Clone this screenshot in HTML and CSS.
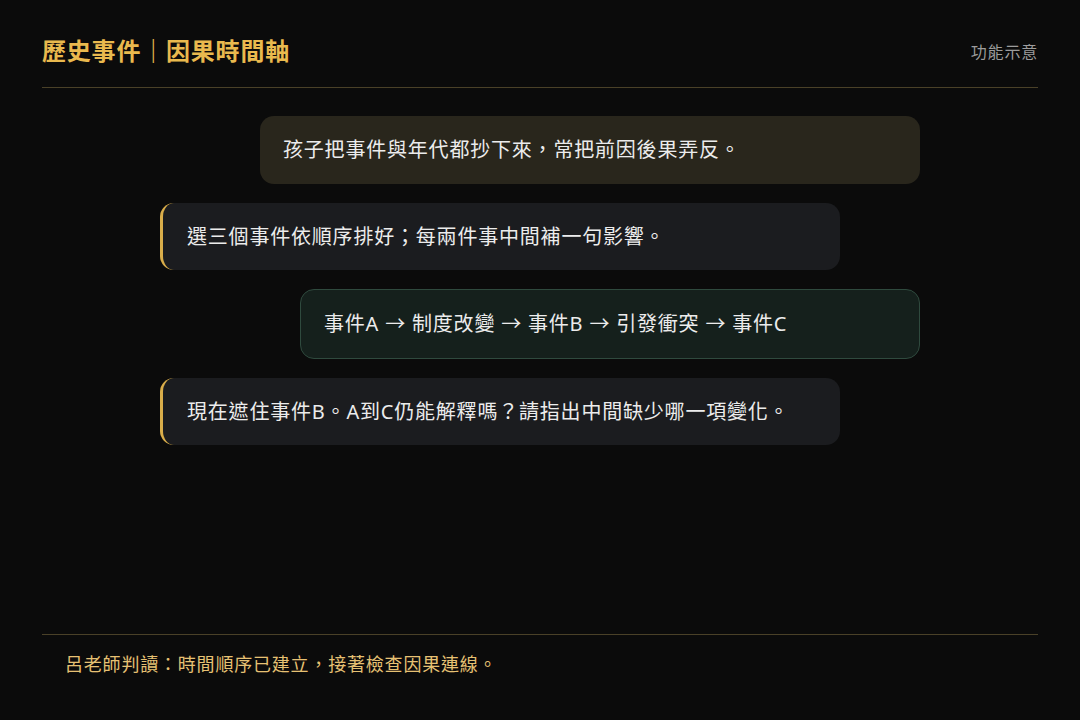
FILE: index.html
```html
<!DOCTYPE html>
<html>
<head lang="zh-Hant">
    <meta charset="UTF-8">
    <title>歷史事件｜因果時間軸</title>
    <link rel="stylesheet" href="styles.css">
</head>
<body>
<div class="page">
    <div class="header">
        <h1 class="title">歷史事件｜因果時間軸</h1>
        <span class="tag">功能示意</span>
    </div>
    <div class="chat">
        <div class="bubble parent">孩子把事件與年代都抄下來，常把前因後果弄反。</div>
        <div class="bubble coach">選三個事件依順序排好；每兩件事中間補一句影響。</div>
        <div class="bubble chain">事件A → 制度改變 → 事件B → 引發衝突 → 事件C</div>
        <div class="bubble coach">現在遮住事件B。A到C仍能解釋嗎？請指出中間缺少哪一項變化。</div>
    </div>
    <div class="footer">呂老師判讀：時間順序已建立，接著檢查因果連線。</div>
</div>
</body>
</html>
```

FILE: styles.css
```css
*{
    margin: 0;
    padding: 0;
    box-sizing: border-box;
}
body{
    background-color: #0b0b0b;
    color: #ececec;
    font-family: "Noto Sans", "Noto Sans CJK TC", sans-serif;
    letter-spacing: 0.8px;
}
.page{
    height: 720px;
    padding: 0 42px;
    display: flex;
    flex-direction: column;
}
.header{
    display: flex;
    justify-content: space-between;
    align-items: center;
    padding: 36px 0 21px;
    border-bottom: 1px solid #4a4128;
}
.header .title{
    font-size: 24px;
    line-height: 30px;
    font-weight: bold;
    color: #e9b94e;
}
.header .tag{
    font-size: 16px;
    color: #9c9c9c;
}
.chat{
    flex: 1;
    width: 760px;
    margin: 0 auto;
    padding-top: 28px;
    display: flex;
    flex-direction: column;
    gap: 19px;
}
.bubble{
    font-size: 20px;
    line-height: 24px;
    padding: 22px 23px;
    border-radius: 14px;
}
.bubble.parent{
    margin-left: 100px;
    background-color: #29261c;
}
.bubble.coach{
    margin-right: 80px;
    padding: 22px 24px 21px;
    background-color: #1b1c1f;
    border-left: 3px solid #d9ad4a;
}
.bubble.chain{
    margin-left: 140px;
    background-color: #15201c;
    border: 1px solid #2f4a3e;
}
.footer{
    border-top: 1px solid #4a4128;
    padding: 17px 23px 44px;
    font-size: 18px;
    line-height: 24px;
    color: #e6c173;
}
```
